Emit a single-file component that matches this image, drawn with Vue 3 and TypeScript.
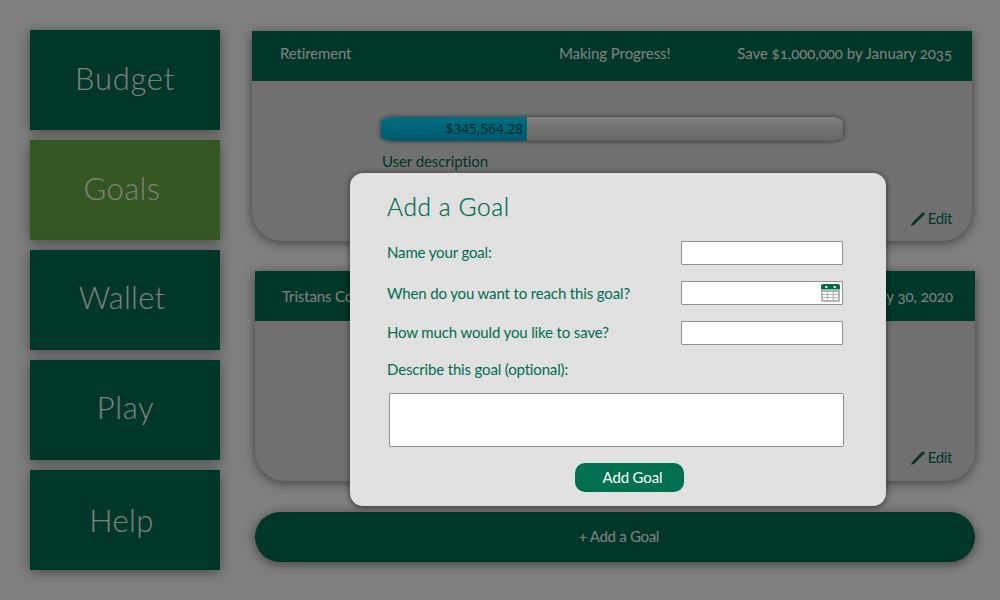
<script setup lang="ts">
import { ref } from 'vue'

interface NavItem { id: string; label: string }
interface Goal { id: string; name: string; status: string; target: string; saved?: string; percent?: number; description?: string }

const nav: NavItem[] = [
  { id: 'budget', label: 'Budget' },
  { id: 'goals', label: 'Goals' },
  { id: 'wallet', label: 'Wallet' },
  { id: 'play', label: 'Play' },
  { id: 'help', label: 'Help' },
]
const active = ref('goals')

const goals: Goal[] = [
  {
    id: 'retirement', name: 'Retirement', status: 'Making Progress!', target: 'Save $1,000,000 by January 2035',
    saved: '$345,564.28', percent: 31.6, description: 'User description',
  },
  { id: 'college', name: 'Tristans College', status: '', target: 'May 30, 2020' },
]

const name = ref('')
const date = ref('')
const amount = ref('')
const notes = ref('')
</script>

<template>
  <div class="page">
    <nav class="sidebar">
      <button v-for="n in nav" :key="n.id" class="tile" :class="[n.id, { active: n.id === active }]" @click="active = n.id">
        <span>{{ n.label }}</span>
      </button>
    </nav>

    <main class="main">
      <section v-for="g in goals" :key="g.id" class="card" :class="g.id">
        <header class="card-head">
          <span class="goal-name">{{ g.name }}</span>
          <span class="status">{{ g.status }}</span>
          <span class="target">{{ g.target }}</span>
        </header>
        <div class="card-body">
          <div v-if="g.saved" class="progress">
            <div class="fill" :style="{ width: g.percent + '%' }">{{ g.saved }}</div>
          </div>
          <p v-if="g.description" class="desc">{{ g.description }}</p>
          <a class="edit">
            <svg width="14" height="14" viewBox="0 0 14 14">
              <path d="M0 14 L1 11 L10.9 1.1 Q12.2 -.1 13.3 .8 Q14.2 1.9 13 3.1 L3.1 12.8 Z" fill="#006e50" />
            </svg>
            <span>Edit</span>
          </a>
        </div>
      </section>
      <button class="add-bar"><span>+ Add a Goal</span></button>
    </main>

    <div class="overlay">
      <form class="modal" @submit.prevent>
        <h2>Add a Goal</h2>
        <div class="row">
          <label class="l-name">Name your goal:</label>
          <input v-model="name" type="text" />
        </div>
        <div class="row">
          <label class="l-date">When do you want to reach this goal?</label>
          <div class="date">
            <input v-model="date" type="text" />
            <svg class="cal" width="19" height="18" viewBox="0 0 19 18">
              <rect x="0" y="4" width="19" height="14" rx="1.5" fill="#b4b4b4" />
              <path d="M0 5.2V2Q0 0 2 0H17Q19 0 19 2V5.2Z" fill="#006e46" />
              <rect x="0" y="5.2" width="19" height="1.2" fill="#8fc5b0" />
              <g fill="#fff">
                <rect x="4.3" y="2" width="2" height="2" />
                <rect x="12.7" y="2" width="2" height="2" />
                <rect x="2" y="8" width="4" height="2" /><rect x="7" y="8" width="4.6" height="2" /><rect x="12.8" y="8" width="4" height="2" />
                <rect x="2" y="11" width="4" height="2" /><rect x="7" y="11" width="4.6" height="2" /><rect x="12.8" y="11" width="4" height="2" />
                <rect x="2" y="14" width="4" height="2" /><rect x="7" y="14" width="4.6" height="2" /><rect x="12.8" y="14" width="4" height="2" />
              </g>
            </svg>
          </div>
        </div>
        <div class="row">
          <label class="l-amount">How much would you like to save?</label>
          <input v-model="amount" type="text" />
        </div>
        <label class="l-notes">Describe this goal (optional):</label>
        <textarea v-model="notes"></textarea>
        <button class="submit"><span>Add Goal</span></button>
      </form>
    </div>
  </div>
</template>

<style>
body { background: #fff; }
</style>

<style scoped>
* { box-sizing: border-box; }
.page {
  position: relative;
  width: 1000px;
  height: 600px;
  overflow: hidden;
  display: flex;
  gap: 32px;
  padding: 30px 25px 0 30px;
  background: #fff;
  color: #006e50;
  font-family: "Lato", "Open Sans", sans-serif;
  font-size: 15px;
  letter-spacing: -.14px;
  font-variant-numeric: oldstyle-nums;
  font-variant-ligatures: none;
}
button { border: 0; padding: 0; margin: 0; font: inherit; font-variant-ligatures: none; letter-spacing: inherit; color: #fff; cursor: pointer; }
.sidebar { width: 190px; display: flex; flex-direction: column; gap: 10px; }
.tile {
  height: 100px;
  display: flex;
  justify-content: center;
  padding-top: 29px;
  background: #006e50;
  box-shadow: 0 2px 12px rgba(0, 0, 0, .45);
  font-size: 31px;
  line-height: 38px;
  font-weight: 300;
  letter-spacing: 0;
}
.tile.active { background: #68ae44; }
.budget { letter-spacing: .7px; }
.goals { padding-right: 6px; letter-spacing: .4px; }
.wallet { padding-right: 6px; padding-top: 28px; letter-spacing: .2px; }
.play { padding-left: 1px; padding-top: 28px; letter-spacing: .6px; }
.help { padding-right: 7px; padding-top: 31px; letter-spacing: .4px; }

.main { width: 723px; padding-top: 1px; display: flex; flex-direction: column; }
.card {
  width: 720px;
  height: 210px;
  border-radius: 0 0 30px 30px;
  background: #e1e1e1;
  box-shadow: 0 2px 12px rgba(0, 0, 0, .5);
}
.card.college { margin: 30px 0 0 3px; }
.card-head {
  height: 50px;
  padding: 12px 20px 0 28px;
  display: grid;
  grid-template-columns: 279px 1fr auto;
  background: #006e50;
  color: #fff;
  line-height: 20px;
  white-space: nowrap;
}
.status { letter-spacing: -.08px; }
.target { letter-spacing: -.03px; }
.college .card-head { padding: 15px 22px 0 27px; }
.card-body { height: 160px; padding: 36px 20px 0 129px; display: flex; flex-direction: column; }
.progress {
  width: 462px;
  height: 24px;
  border-radius: 14px / 5px;
  overflow: hidden;
  background: linear-gradient(#fff, #cacaca);
  box-shadow: 0 0 5px rgba(0, 0, 0, .6);
}
.fill {
  height: 24px;
  padding-right: 4px;
  background: linear-gradient(#00dcff, #00b2da);
  color: #005a64;
  text-align: right;
  font: 13.5px/24px "Noto Sans", sans-serif;
  font-variant-numeric: normal;
  letter-spacing: .05px;
}
.desc { margin: 10px 0 0 1px; line-height: 20px; letter-spacing: -.08px; }
.edit { display: flex; align-items: center; gap: 3px; margin: auto 0 13px; align-self: flex-end; line-height: 20px; letter-spacing: -.35px; }
.edit span { margin-top: -3px; }
.edit svg { margin-top: -1px; }
.college .edit { margin-right: 3px; margin-bottom: 14px; }
.add-bar {
  width: 720px;
  height: 50px;
  margin: 31px 0 0 3px;
  padding: 0 0 2px 8px;
  border-radius: 25px;
  background: #006e50;
  box-shadow: 0 2px 12px rgba(0, 0, 0, .5);
  letter-spacing: -.3px;
}

.overlay {
  position: absolute;
  inset: 0;
  padding: 173px 0 0 350px;
  background: rgba(0, 0, 0, .5);
}
.modal {
  width: 536px;
  height: 333px;
  padding: 18px 42px 0 37px;
  border-radius: 13px;
  background: #e1e1e1;
  box-shadow: 0 1px 6px rgba(0, 0, 0, .6);
  display: flex;
  flex-direction: column;
}
h2 { margin: 0 0 18px; height: 32px; font-size: 24.5px; line-height: 32px; font-weight: 300; letter-spacing: .6px; -webkit-text-stroke: .25px #006e50; }
.row { display: flex; justify-content: space-between; width: 456px; height: 24px; margin-bottom: 16px; line-height: 22px; white-space: nowrap; }
.date { position: relative; }
.cal { position: absolute; right: 3px; top: 3px; }
input, textarea { display: block; margin: 0; border: 1px solid #929292; border-radius: 1px; background: #fff; outline: none; resize: none; font: inherit; color: #006e50; }
input { width: 162px; height: 24px; padding: 0 6px; }
.l-date { padding-top: 1px; }
.l-notes { line-height: 22px; margin: -3px 0 2px; letter-spacing: -.16px; }
textarea { width: 455px; height: 54px; margin: 11px 0 0 2px; padding: 4px 6px; }
.submit {
  width: 109px;
  height: 29px;
  margin: 16px 0 0 188px;
  padding: 0 0 2px 6px;
  border-radius: 10px;
  background: #007050;
}
</style>
